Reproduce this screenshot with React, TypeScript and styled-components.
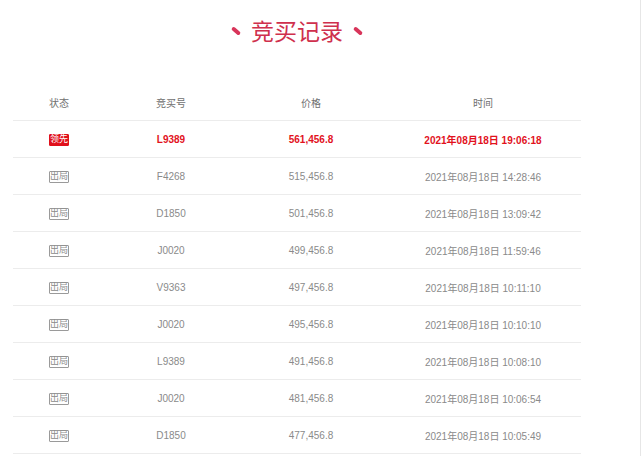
import React from "react";
import styled, { createGlobalStyle } from "styled-components";

const Global = createGlobalStyle`
  html, body { margin: 0; padding: 0; background: #fff; }
  body { font-family: "Liberation Sans", Arial, "Noto Sans CJK SC", sans-serif; }
  * { box-sizing: border-box; }
`;

const Page = styled.div`
  width: 641px;
  min-height: 456px;
  border-right: 1px solid #e6e6e6;
  padding-left: 13px;
`;

const Container = styled.div`
  width: 568px;
`;

const TitleBar = styled.div`
  height: 64px;
  display: flex;
  align-items: center;
  justify-content: center;
  gap: 10px;
`;

const Mark = styled.span`
  display: inline-block;
  width: 10px;
  height: 4px;
  border-radius: 2px;
  background: #d8355a;
  transform: rotate(40deg);
  margin-top: -2px;
`;

const Title = styled.h1`
  margin: 0;
  font-size: 23px;
  font-weight: normal;
  color: #cf304d;
  line-height: 1;
  padding-top: 1px;
`;

const Spacer = styled.div`
  height: 20px;
`;

const Row = styled.div`
  display: grid;
  grid-template-columns: 92px 132px 148px 196px;
  height: 37px;
  align-items: center;
  border-bottom: 1px solid #ececec;
`;

const Cell = styled.div<{ $hot?: boolean; $head?: boolean }>`
  text-align: center;
  font-size: 10px;
  color: ${(p) => (p.$head ? "#707070" : p.$hot ? "#e2121d" : "#8a8a8a")};
  font-weight: ${(p) => (p.$hot ? "bold" : "normal")};
  display: flex;
  justify-content: center;
  align-items: center;
  padding-top: 1px;
`;

const Badge = styled.span<{ $lead?: boolean }>`
  display: inline-flex;
  align-items: center;
  justify-content: center;
  width: 20px;
  height: 12px;
  font-size: 9px;
  line-height: 1;
  border: 1px solid ${(p) => (p.$lead ? "#e0101b" : "#9a9a9a")};
  background: ${(p) => (p.$lead ? "#e0101b" : "#fff")};
  color: ${(p) => (p.$lead ? "#fff" : "#8a8a8a")};
  border-radius: 1px;
`;

const rows = [
  { lead: true, id: "L9389", price: "561,456.8", time: "2021年08月18日 19:06:18" },
  { id: "F4268", price: "515,456.8", time: "2021年08月18日 14:28:46" },
  { id: "D1850", price: "501,456.8", time: "2021年08月18日 13:09:42" },
  { id: "J0020", price: "499,456.8", time: "2021年08月18日 11:59:46" },
  { id: "V9363", price: "497,456.8", time: "2021年08月18日 10:11:10" },
  { id: "J0020", price: "495,456.8", time: "2021年08月18日 10:10:10" },
  { id: "L9389", price: "491,456.8", time: "2021年08月18日 10:08:10" },
  { id: "J0020", price: "481,456.8", time: "2021年08月18日 10:06:54" },
  { id: "D1850", price: "477,456.8", time: "2021年08月18日 10:05:49" },
];

export default function App() {
  return (
    <>
      <Global />
      <Page>
        <Container>
          <TitleBar>
            <Mark />
            <Title>竞买记录</Title>
            <Mark />
          </TitleBar>
          <Spacer />
          <Row>
            <Cell $head>状态</Cell>
            <Cell $head>竞买号</Cell>
            <Cell $head>价格</Cell>
            <Cell $head>时间</Cell>
          </Row>
          {rows.map((r, i) => (
            <Row key={i}>
              <Cell>
                <Badge $lead={r.lead}>{r.lead ? "领先" : "出局"}</Badge>
              </Cell>
              <Cell $hot={r.lead}>{r.id}</Cell>
              <Cell $hot={r.lead}>{r.price}</Cell>
              <Cell $hot={r.lead}>{r.time}</Cell>
            </Row>
          ))}
        </Container>
      </Page>
    </>
  );
}
